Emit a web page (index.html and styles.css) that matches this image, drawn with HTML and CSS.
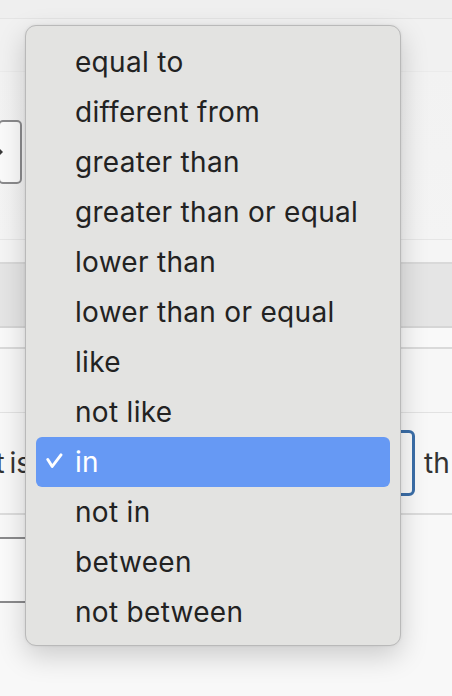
FILE: index.html
```html
<!DOCTYPE html>
<html>
<head>
<meta charset="utf-8">
<link rel="stylesheet" href="styles.css">
</head>
<body>
<div class="page">
  <div class="band b1"></div>
  <div class="band b2"></div>
  <div class="band b3"><div class="box-left"><span class="caret"></span></div></div>
  <div class="band b4"></div>
  <div class="band b5"></div>
  <div class="band b6"></div>
  <div class="band b7"></div>
  <div class="band b8">
    <div class="lbl-left">t is</div>
    <div class="field-blue"></div>
    <div class="lbl-right">th</div>
  </div>
  <div class="band b9"><div class="box-left2"></div></div>
</div>

<div class="menu">
  <div class="item">equal to</div>
  <div class="item">different from</div>
  <div class="item">greater than</div>
  <div class="item">greater than or equal</div>
  <div class="item">lower than</div>
  <div class="item">lower than or equal</div>
  <div class="item">like</div>
  <div class="item">not like</div>
  <div class="item selected"><svg class="check" width="18" height="17" viewBox="0 0 18 17"><path d="M1.8 6.5 L6.2 13.5 L15 1.8" fill="none" stroke="#fff" stroke-width="2.9" stroke-linecap="round" stroke-linejoin="round"/></svg>in</div>
  <div class="item">not in</div>
  <div class="item">between</div>
  <div class="item">not between</div>
</div>
</body>
</html>
```

FILE: styles.css
```css
html, body {
  margin: 0;
  padding: 0;
}
body {
  width: 452px;
  height: 696px;
  overflow: hidden;
  background: #f6f6f6;
  font-family: "Inter", "Liberation Sans", sans-serif;
  position: relative;
}
.page {
  display: flex;
  flex-direction: column;
}
.band {
  box-sizing: border-box;
  display: flex;
  align-items: center;
}
.b1 { height: 19px; background: #efefef; border-bottom: 1px solid #e4e4e4; }
.b2 { height: 53px; background: #f1f1f1; border-bottom: 1px solid #ebebeb; }
.b3 { height: 168px; background: linear-gradient(#f2f2f2, #f4f4f4); border-bottom: 1px solid #e6e6e6; }
.b4 { height: 24px; background: #f5f5f5; border-bottom: 2px solid #d9d9d9; }
.b5 { height: 64px; background: #e5e5e5; border-bottom: 2px solid #d6d6d6; }
.b6 { height: 21px; background: #f9f9f9; border-bottom: 2px solid #dadada; }
.b7 { height: 64px; background: #f7f7f7; border-bottom: 1px solid #e2e2e2; }
.b8 { height: 102px; background: #f8f8f8; border-bottom: 2px solid #dcdcdc; }
.b9 { height: 181px; background: #f8f8f8; align-items: flex-start; }

.box-left {
  width: 24px;
  height: 64px;
  margin-left: -2px;
  margin-top: -7px;
  box-sizing: border-box;
  border: 2px solid #8a8a8c;
  border-radius: 5px;
  background: #fafafa;
  display: flex;
  align-items: center;
  justify-content: flex-start;
  overflow: hidden;
}
.caret {
  width: 0;
  height: 0;
  border-top: 3px solid transparent;
  border-bottom: 3px solid transparent;
  border-left: 3px solid #3a3a3a;
}
.box-left2 {
  margin-top: 22px;
  width: 26px;
  height: 66px;
  box-sizing: border-box;
  border-top: 2px solid #8a8a8c;
  border-bottom: 2px solid #8a8a8c;
  background: #fbfbfb;
}
.lbl-left {
  width: 31px;
  font-size: 28px;
  color: #333;
  white-space: nowrap;
  word-spacing: -3px;
  overflow: hidden;
  flex: none;
  display: flex;
  justify-content: flex-end;
}
.field-blue {
  margin-left: 339px;
  width: 45px;
  height: 66px;
  box-sizing: border-box;
  border: 3px solid #3b6ea8;
  border-radius: 6px;
  background: #fafafa;
  flex: none;
}
.lbl-right {
  margin-left: 9px;
  font-size: 28px;
  color: #333;
  white-space: nowrap;
}

.menu {
  position: absolute;
  left: 25px;
  top: 25px;
  width: 376px;
  height: 621px;
  box-sizing: border-box;
  background: #e3e3e1;
  border: 1px solid #b9b9b9;
  border-radius: 11px;
  box-shadow: 0 10px 28px rgba(0,0,0,0.18), 0 0 3px rgba(0,0,0,0.08);
  padding: 11px 10px 9px 10px;
  display: flex;
  flex-direction: column;
}
.item {
  height: 50px;
  display: flex;
  align-items: center;
  padding-left: 39px;
  font-size: 28px;
  letter-spacing: 0.3px;
  color: #222;
  border-radius: 6px;
  position: relative;
  flex: none;
}
.item.selected {
  background: #6699f4;
  color: #fff;
}
.check {
  position: absolute;
  left: 10px;
  top: 16px;
}
```
